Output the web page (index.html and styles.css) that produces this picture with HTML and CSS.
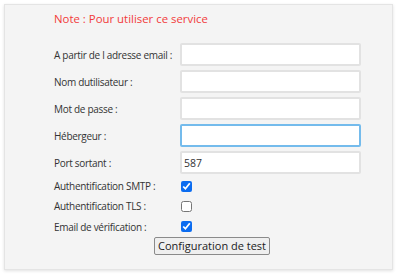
FILE: index.html
```html
<!DOCTYPE html>
<html lang="fr">
<head>
    <meta charset="UTF-8">
    <title>Configuration email</title>
    <link rel="stylesheet" href="styles.css">
</head>
<body>
    <div class="panel">
        <div class="note">Note : Pour utiliser ce service</div>

        <form class="form">
            <label class="label">A partir de l adresse email :</label>
            <input class="field" type="text">

            <label class="label">Nom dutilisateur :</label>
            <input class="field" type="text">

            <label class="label">Mot de passe :</label>
            <input class="field" type="password">

            <label class="label">Hébergeur :</label>
            <input class="field focused" type="text">

            <label class="label">Port sortant :</label>
            <input class="field" type="text" value="587">

            <label class="label check-label">Authentification SMTP :</label>
            <div class="check"><input type="checkbox" checked></div>

            <label class="label check-label">Authentification TLS :</label>
            <div class="check"><input type="checkbox"></div>

            <label class="label check-label">Email de vérification :</label>
            <div class="check"><input type="checkbox" checked></div>

            <div class="actions">
                <button type="button" class="test-button">Configuration de test</button>
            </div>
        </form>
    </div>
</body>
</html>
```

FILE: styles.css
```css
body {
    margin: 0;
    padding: 4px;
    background: #ffffff;
    font-family: 'Open Sans', 'Noto Sans', sans-serif;
    font-size: 10px;
    color: #333333;
}

.panel {
    width: 389px;
    height: 266px;
    box-sizing: border-box;
    background: #f4f4f4;
    border: 1px solid #e4e4e4;
    box-shadow: 0 1px 3px rgba(0, 0, 0, 0.12);
    padding: 5px 0 0 49px;
}

.note {
    color: #f23b3b;
    font-size: 11.4px;
    height: 17px;
    line-height: 17px;
    white-space: nowrap;
}

.form {
    display: grid;
    grid-template-columns: 126px 181px;
    row-gap: 4px;
    margin-top: 16px;
}

.label {
    display: flex;
    align-items: center;
    height: 23px;
    white-space: nowrap;
    letter-spacing: -0.3px;
}

.check-label {
    height: 16.3px;
}

.field {
    height: 23px;
    box-sizing: border-box;
    border: 2px solid #e2e2e2;
    border-radius: 2px;
    background: #ffffff;
    padding: 0 2px;
    font-family: inherit;
    font-size: 10.5px;
    color: #333333;
    outline: none;
}

.field.focused {
    border-color: #74bbec;
}

.check {
    display: flex;
    align-items: center;
    height: 16.3px;
}

.check input {
    width: 11px;
    height: 11px;
    margin: 0 0 0 1px;
    accent-color: #0b6cf0;
}

.actions {
    grid-column: 1 / 3;
    padding-left: 100px;
    margin-top: -2px;
}

.test-button {
    height: 18px;
    width: 116px;
    padding: 0;
    white-space: nowrap;
    background: #efefef;
    border: 1px solid #8a8a8a;
    border-radius: 2px;
    font-family: inherit;
    font-size: 11px;
    color: #222222;
}
```
